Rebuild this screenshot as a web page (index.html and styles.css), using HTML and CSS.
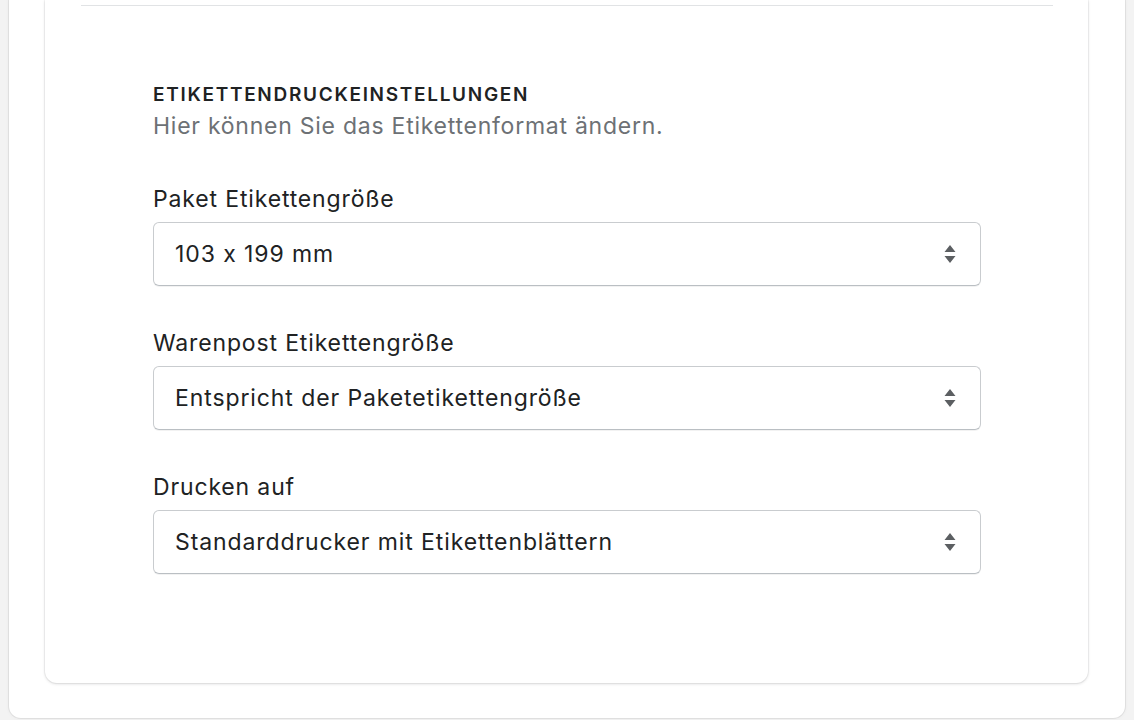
FILE: index.html
```html
<!DOCTYPE html>
<html lang="de">
<head>
<meta charset="utf-8">
<title>Etikettendruckeinstellungen</title>
<link rel="stylesheet" href="styles.css">
</head>
<body>
<div class="page">
  <div class="panel">
    <div class="card">
      <div class="divider"></div>
      <section class="settings">
        <h2 class="heading">ETIKETTENDRUCKEINSTELLUNGEN</h2>
        <p class="subtitle">Hier können Sie das Etikettenformat ändern.</p>

        <div class="field">
          <label class="label">Paket Etikettengröße</label>
          <div class="select">
            <span class="value">103 x 199 mm</span>
            <svg class="arrows" width="12" height="20" viewBox="0 0 12 20" aria-hidden="true"><path d="M6 1 L11.5 8 H0.5 Z M6 19 L11.5 12 H0.5 Z" fill="#5c5f62"/></svg>
          </div>
        </div>

        <div class="field">
          <label class="label">Warenpost Etikettengröße</label>
          <div class="select">
            <span class="value">Entspricht der Paketetikettengröße</span>
            <svg class="arrows" width="12" height="20" viewBox="0 0 12 20" aria-hidden="true"><path d="M6 1 L11.5 8 H0.5 Z M6 19 L11.5 12 H0.5 Z" fill="#5c5f62"/></svg>
          </div>
        </div>

        <div class="field">
          <label class="label">Drucken auf</label>
          <div class="select">
            <span class="value">Standarddrucker mit Etikettenblättern</span>
            <svg class="arrows" width="12" height="20" viewBox="0 0 12 20" aria-hidden="true"><path d="M6 1 L11.5 8 H0.5 Z M6 19 L11.5 12 H0.5 Z" fill="#5c5f62"/></svg>
          </div>
        </div>
      </section>
    </div>
  </div>
</div>
</body>
</html>
```

FILE: styles.css
```css
* { box-sizing: border-box; }

html, body {
  margin: 0;
  padding: 0;
  background: #f3f3f3;
  font-family: Inter, "Noto Sans", "Liberation Sans", sans-serif;
  font-feature-settings: "calt" 0;
  color: #202223;
}

.page {
  width: 1134px;
  height: 720px;
  padding: 0 9px 0 9px;
  overflow: hidden;
}

.panel {
  background: #ffffff;
  border-radius: 0 0 12px 12px;
  box-shadow: 0 0 0 1px rgba(0, 0, 0, 0.06), 0 0 4px rgba(0, 0, 0, 0.06);
  padding: 0 37px 35px 36px;
}

.card {
  background: #ffffff;
  border-radius: 0 0 12px 12px;
  box-shadow: 0 0 0 1px rgba(63, 63, 68, 0.05), 0 1px 3px rgba(63, 63, 68, 0.18);
  padding: 5px 35px 109px 36px;
}

.divider {
  height: 1px;
  background: #e1e3e5;
}

.settings {
  padding: 77px 72px 0 72px;
}

.heading {
  margin: 0;
  font-size: 19px;
  line-height: 24px;
  font-weight: 600;
  letter-spacing: 1.7px;
  color: #202223;
}

.subtitle {
  margin: 5px 0 0 0;
  font-size: 23px;
  line-height: 28px;
  letter-spacing: 0.75px;
  color: #6d7175;
}

.field {
  margin-top: 45px;
  display: flex;
  flex-direction: column;
  gap: 9px;
}

.field + .field {
  margin-top: 43px;
}

.label {
  font-size: 23px;
  line-height: 28px;
  letter-spacing: 0.85px;
  color: #202223;
}

.select {
  height: 64px;
  border: 1px solid #c9cccf;
  border-bottom-color: #babfc3;
  border-radius: 6px;
  box-shadow: 0 1px 0 rgba(0, 0, 0, 0.05);
  display: flex;
  align-items: center;
  justify-content: space-between;
  padding: 0 24px 0 21px;
}

.value {
  font-size: 23px;
  line-height: 28px;
  letter-spacing: 0.9px;
  color: #202223;
}

.arrows {
  display: block;
}
```
